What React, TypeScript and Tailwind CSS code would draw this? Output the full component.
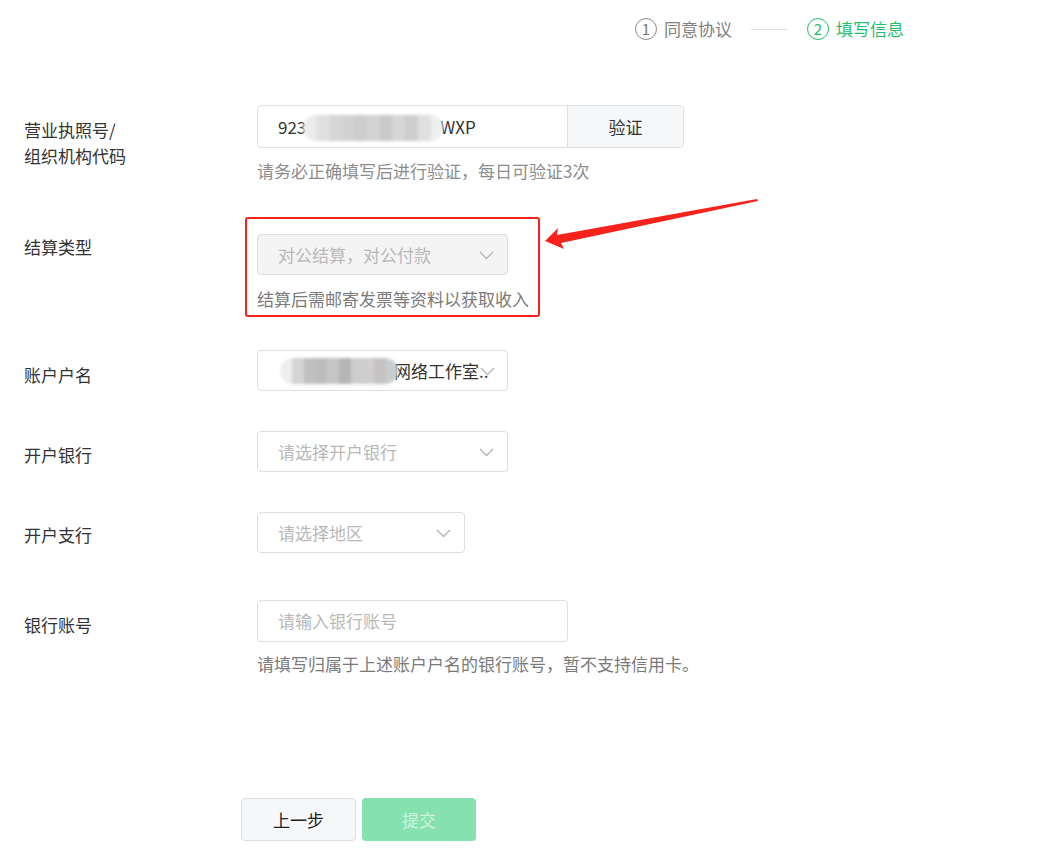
import React from 'react';

const font = { fontFamily: '"Noto Sans CJK SC", "Noto Sans", sans-serif' };

function Chevron({ className = '' }: { className?: string }) {
    return (
        <svg className={className} width="15" height="9" viewBox="0 0 15 9" fill="none">
            <path d="M1 1l6.5 6.5L14 1" stroke="#b4b4b4" strokeWidth="1.3" />
        </svg>
    );
}

// pixelated blur used to mask private data
function Mosaic({ width, shades }: { width: number; shades: string[] }) {
    return (
        <span className="inline-flex h-[26px] align-middle overflow-hidden rounded-full blur-[1.5px]" style={{ width }}>
            {shades.map((c, i) => (
                <span key={i} className="flex-1 h-full" style={{ background: c }} />
            ))}
        </span>
    );
}

function Row({ label, labelPt, mt, children }: { label: React.ReactNode; labelPt: string; mt: string; children: React.ReactNode }) {
    return (
        <div className={`flex ${mt}`}>
            <div className={`w-[257px] pl-6 text-[17px] leading-[26px] text-[#333] ${labelPt}`}>{label}</div>
            <div>{children}</div>
        </div>
    );
}

function Select({ width, placeholder, disabled = false }: { width: string; placeholder: string; disabled?: boolean }) {
    return (
        <div className={`relative ${width} h-[41px] rounded-[4px] border border-[#dcdee2] flex items-center pl-5 ${disabled ? 'bg-[#f3f4f3]' : 'bg-white'}`}>
            <span className="text-[17px] text-[#b8b8b8]">{placeholder}</span>
            <Chevron className="absolute right-[13px] top-[16px]" />
        </div>
    );
}

export default function App() {
    return (
        <div className="relative w-[1055px] h-[856px] bg-white overflow-hidden" style={font}>
            {/* steps */}
            <div className="flex items-center h-[58px] pl-[635px] text-[17px]">
                <span className="w-[22px] h-[22px] rounded-full border-[1.5px] border-[#8a8a8a] flex items-center justify-center text-[15px] text-[#777]">1</span>
                <span className="ml-[7px] text-[#808080]">同意协议</span>
                <span className="ml-[19px] w-[36px] h-px bg-[#dcdcdc]" />
                <span className="ml-[20px] w-[22px] h-[22px] rounded-full border-[1.5px] border-[#1fc06c] flex items-center justify-center text-[15px] text-[#1fc06c]">2</span>
                <span className="ml-[7px] text-[#1fc06c]">填写信息</span>
            </div>

            <Row mt="mt-[47px]" labelPt="pt-[12px]" label={<>营业执照号/<br />组织机构代码</>}>
                <div className="flex w-[427px] h-[43px] rounded-[4px] border border-[#dcdee2] overflow-hidden">
                    <div className="flex-1 flex items-center pl-5 text-[17px] text-[#333]">
                        <span>923</span>
                        <span className="-ml-[3px]">
                            <Mosaic width={140} shades={['#ececec', '#e0e0e0', '#d6d6d6', '#d2d2d2', '#cdcdcd', '#d3d3d3', '#c9c9c9', '#d6d6d6', '#cecece', '#e0e0e0', '#efefef']} />
                        </span>
                        <span className="-ml-[3px]">WXP</span>
                    </div>
                    <div className="w-[116px] border-l border-[#dcdee2] bg-[#f6f7f9] flex items-center justify-center text-[17px] text-[#333]">验证</div>
                </div>
                <div className="mt-[12px] text-[17px] leading-[22px] text-[#8c8c8c]">请务必正确填写后进行验证，每日可验证3次</div>
            </Row>

            <Row mt="mt-[52px]" labelPt="pt-0" label="结算类型">
                <div className="relative">
                    <Select width="w-[251px]" placeholder="对公结算，对公付款" disabled />
                    <div className="mt-[13px] text-[17px] leading-[22px] text-[#7a7a7a]">结算后需邮寄发票等资料以获取收入</div>
                    <div className="absolute left-[-12px] top-[-17px] w-[295px] h-[100px] border-[2.5px] border-[#f5231b] rounded-[3px]" />
                </div>
            </Row>

            <Row mt="mt-[40px]" labelPt="pt-[12px]" label="账户户名">
                <div className="relative w-[251px] h-[41px] rounded-[4px] border border-[#dcdee2] flex items-center pl-[22px] text-[17px] text-[#333]">
                    <Mosaic width={118} shades={['#eeeeee', '#d4d4d4', '#c0c0c0', '#bcbcbc', '#c6c6c6', '#b5b5b5', '#cdcdd0', '#d2cdcd', '#c3c3c3', '#c8cccc']} />
                    <span className="ml-[-4px] whitespace-nowrap">网络工作室..</span>
                    <Chevron className="absolute right-[12px] top-[16px]" />
                </div>
            </Row>

            <Row mt="mt-[40px]" labelPt="pt-[11px]" label="开户银行">
                <Select width="w-[251px]" placeholder="请选择开户银行" />
            </Row>

            <Row mt="mt-[40px]" labelPt="pt-[10px]" label="开户支行">
                <Select width="w-[208px]" placeholder="请选择地区" />
            </Row>

            <Row mt="mt-[47px]" labelPt="pt-[12px]" label="银行账号">
                <div className="w-[311px] h-[42px] rounded-[4px] border border-[#dcdee2] flex items-center pl-5 text-[17px] text-[#b8b8b8]">请输入银行账号</div>
                <div className="mt-[11px] text-[17px] leading-[22px] text-[#7a7a7a]">请填写归属于上述账户户名的银行账号，暂不支持信用卡。</div>
            </Row>

            {/* actions */}
            <div className="flex gap-[6px] pl-[241px] mt-[123px]">
                <button className="w-[115px] h-[43px] rounded-[4px] border border-[#dcdee2] bg-[#f6f7f9] text-[17px] text-[#222]">上一步</button>
                <button className="w-[114px] h-[43px] rounded-[4px] bg-[#85e1b0] text-[17px] text-[#cdf3dd]">提交</button>
            </div>

            {/* annotation arrow */}
            <svg className="absolute left-0 top-0 pointer-events-none" width="1055" height="856" viewBox="0 0 1055 856">
                <polygon points="545,241 558,228 557,235 757,199 758,201 561,243 564,249" fill="#f5231b" />
            </svg>
        </div>
    );
}
